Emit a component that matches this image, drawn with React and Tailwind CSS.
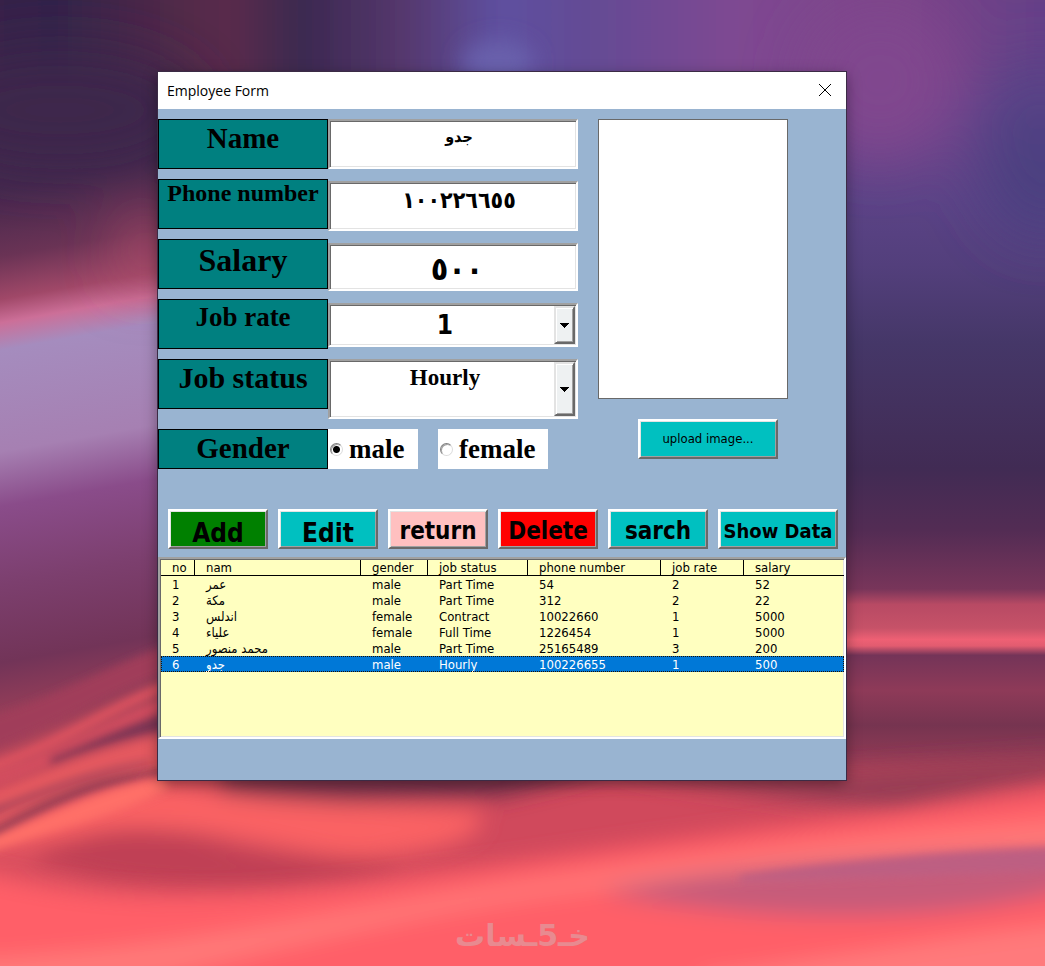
import { useState } from "react"
import clsx from "clsx"

const employees = [
  { no: 1, name: "عمر", gender: "male", status: "Part Time", phone: "54", rate: 2, salary: 52 },
  { no: 2, name: "مكة", gender: "male", status: "Part Time", phone: "312", rate: 2, salary: 22 },
  { no: 3, name: "اندلس", gender: "female", status: "Contract", phone: "10022660", rate: 1, salary: 5000 },
  { no: 4, name: "علياء", gender: "female", status: "Full Time", phone: "1226454", rate: 1, salary: 5000 },
  { no: 5, name: "محمد منصور", gender: "male", status: "Part Time", phone: "25165489", rate: 3, salary: 200 },
  { no: 6, name: "جدو", gender: "male", status: "Hourly", phone: "100226655", rate: 1, salary: 500 },
]

const columns = [
  { label: "no", width: "w-[34px]" },
  { label: "nam", width: "w-[166px]" },
  { label: "gender", width: "w-[67px]" },
  { label: "job status", width: "w-[100px]" },
  { label: "phone number", width: "w-[133px]" },
  { label: "job rate", width: "w-[83px]" },
  { label: "salary", width: "" },
]

const actions = [
  { label: "Add", style: "bg-[#008000] text-[26px] pt-2" },
  { label: "Edit", style: "bg-[#00c0c0] text-[26px] pt-2" },
  { label: "return", style: "bg-[#ffc0c0] text-[24px] pt-1" },
  { label: "Delete", style: "bg-[#ff0000] text-[24px] pt-1" },
  { label: "sarch", style: "bg-[#00c0c0] text-[24px] pt-1" },
  { label: "Show Data", style: "bg-[#00c0c0] text-[20px] pt-1" },
]

const serif = "font-['Liberation_Serif',serif] font-bold"
const sans = "font-['DejaVu_Sans_Condensed','DejaVu_Sans',sans-serif]"

// Classic two-step bevels: sunken for fields, raised for buttons
const sunken =
  "border-2 border-t-[#a0a0a0] border-l-[#a0a0a0] border-r-white border-b-white shadow-[inset_1px_1px_0_#696969,inset_-1px_-1px_0_#e3e3e3]"
const raised =
  "border-2 border-t-white border-l-white border-r-[#696969] border-b-[#696969] shadow-[inset_1px_1px_0_#e3e3e3,inset_-1px_-1px_0_#a0a0a0]"

function Wallpaper() {
  return (
    <svg
      className="absolute inset-0 h-full w-full"
      viewBox="0 0 1045 966"
      preserveAspectRatio="xMidYMid slice"
      aria-hidden="true"
    >
      <defs>
        <linearGradient id="left" gradientUnits="userSpaceOnUse" x1="80" y1="0" x2="214" y2="758">
          <stop offset="0" stopColor="#38264c" />
          <stop offset="0.22" stopColor="#43274d" />
          <stop offset="0.31" stopColor="#6a3355" />
          <stop offset="0.365" stopColor="#a04868" />
          <stop offset="0.395" stopColor="#cc6f98" />
          <stop offset="0.43" stopColor="#a58cbe" />
          <stop offset="0.56" stopColor="#a680b2" />
          <stop offset="0.63" stopColor="#8a4c8a" />
          <stop offset="0.73" stopColor="#7c3f6e" />
          <stop offset="0.83" stopColor="#723458" />
          <stop offset="0.9" stopColor="#983e58" />
          <stop offset="1" stopColor="#d44e5c" />
        </linearGradient>
        <linearGradient id="right" gradientUnits="userSpaceOnUse" x1="0" y1="0" x2="0" y2="780">
          <stop offset="0" stopColor="#6c3f86" />
          <stop offset="0.13" stopColor="#6e448c" />
          <stop offset="0.26" stopColor="#5b4386" />
          <stop offset="0.34" stopColor="#533f7c" />
          <stop offset="0.44" stopColor="#453768" />
          <stop offset="0.6" stopColor="#412b54" />
          <stop offset="0.68" stopColor="#532c54" />
          <stop offset="0.755" stopColor="#78355a" />
          <stop offset="0.775" stopColor="#b84a64" />
          <stop offset="0.805" stopColor="#c65268" />
          <stop offset="0.82" stopColor="#ee6074" />
          <stop offset="0.828" stopColor="#e25c70" />
          <stop offset="0.84" stopColor="#743458" />
          <stop offset="0.885" stopColor="#8e3a58" />
          <stop offset="0.93" stopColor="#763450" />
          <stop offset="1" stopColor="#a03e58" />
        </linearGradient>
        <linearGradient id="top">
          <stop offset="0" stopColor="#3c2448" />
          <stop offset="0.1" stopColor="#32244a" />
          <stop offset="0.18" stopColor="#4c2848" />
          <stop offset="0.25" stopColor="#5a2c4c" />
          <stop offset="0.31" stopColor="#3b2850" />
          <stop offset="0.4" stopColor="#56386e" />
          <stop offset="0.48" stopColor="#5e50a0" />
          <stop offset="0.56" stopColor="#644b94" />
          <stop offset="0.68" stopColor="#7e4892" />
          <stop offset="0.82" stopColor="#7c4488" />
          <stop offset="1" stopColor="#5c4088" />
        </linearGradient>
        <filter id="soft" x="-30%" y="-60%" width="160%" height="220%">
          <feGaussianBlur stdDeviation="11" />
        </filter>
        <filter id="wide" x="-60%" y="-60%" width="220%" height="220%">
          <feGaussianBlur stdDeviation="28" />
        </filter>
        <filter id="fine" x="-30%" y="-60%" width="160%" height="220%">
          <feGaussianBlur stdDeviation="4" />
        </filter>
      </defs>

      <rect width="1045" height="966" fill="#d84e5e" />
      <rect width="500" height="790" fill="url(#left)" />
      <rect x="500" width="545" height="790" fill="url(#right)" />
      <rect x="-60" y="-60" width="1165" height="150" fill="url(#top)" filter="url(#soft)" />

      {/* sky */}
      <g filter="url(#wide)">
        <ellipse cx="880" cy="80" rx="80" ry="80" fill="#80468e" />
        <ellipse cx="1040" cy="140" rx="70" ry="80" fill="#564386" />
        <ellipse cx="1045" cy="180" rx="60" ry="60" fill="#4c3f80" />
        <ellipse cx="60" cy="110" rx="140" ry="60" fill="#3c264b" />
        <ellipse cx="145" cy="250" rx="26" ry="34" fill="#a84866" />
      </g>
      <ellipse cx="498" cy="62" rx="36" ry="22" fill="#6960ac" filter="url(#soft)" />

      {/* streaks on the left */}
      <g filter="url(#fine)">
        <path d="M-20 720 C50 700 110 665 170 645 L170 672 C110 692 60 724 -20 755Z" fill="#a03d5a" />
        <path d="M-20 765 C50 745 110 700 170 680 L170 690 C110 712 60 750 -20 775Z" fill="#e0535f" />
        <path d="M-20 778 C50 758 110 718 170 696 L170 708 C110 728 60 768 -20 790Z" fill="#d44e5e" />
        <path d="M50 758 C90 742 130 722 170 712 L170 728 C120 738 80 752 50 764Z" fill="#7a3454" />
        <path d="M-20 800 C50 770 110 745 170 735 L170 770 C100 785 40 810 -20 836Z" fill="#e4585f" />
        <path d="M-20 835 C40 800 90 775 165 768 L165 776 C110 784 60 800 -20 850Z" fill="#8c3a52" />
        <path d="M-20 812 C40 790 90 768 150 760 L150 764 C90 776 40 795 -20 822Z" fill="#a8445a" />
      </g>

      {/* clouds under the horizon */}
      <path d="M150 783 L1100 770 L1100 850 L600 880 L150 870Z" fill="#d04a5c" filter="url(#soft)" />
      <g filter="url(#soft)">
        <path d="M220 770 L620 768 L500 796 L330 803 L220 793Z" fill="#6c2f48" />
        <path d="M600 770 L850 770 L1060 755 L1060 775 L900 812 L800 800Z" fill="#983c54" />
        <path d="M-20 850 C50 810 110 795 170 782 C260 805 400 800 480 812 C490 830 460 850 360 858 C260 850 180 815 90 835 Z" fill="#fa6264" />
        <path d="M30 860 C90 815 180 825 240 848 C320 862 400 850 400 868 C330 892 200 895 100 880Z" fill="#c04055" />
      </g>
      <path d="M-20 842 C40 822 90 790 165 778 L170 788 C120 815 60 826 -20 856Z" fill="#ff7067" filter="url(#fine)" />
      <g filter="url(#soft)">
        <path d="M-40 865 C120 915 300 895 480 868 C680 838 850 818 1100 785 L1100 1010 L-40 1010Z" fill="#ff5f68" />
        <path d="M-40 960 C200 950 380 900 560 878 C760 848 900 834 1100 818 L1100 848 C900 850 700 875 560 894 C400 915 260 955 160 975 L-40 1000Z" fill="#ff7a79" />
        <path d="M600 892 C720 866 900 856 1100 852 L1100 880 C960 930 740 922 600 892Z" fill="#c65c7a" />
        <path d="M700 975 C850 955 960 935 1100 920 L1100 1000 L700 1000Z" fill="#ff7a7c" />
      </g>
      <path d="M740 876 C850 860 960 850 1080 846 L1080 870 C980 874 860 880 740 882Z" fill="#bd5f82" filter="url(#fine)" />
    </svg>
  )
}

function FieldLabel({ htmlFor, className, children }) {
  return (
    <label
      htmlFor={htmlFor}
      className={clsx(serif, "block h-[50px] border border-black bg-[#008080] text-center", className)}
    >
      {children}
    </label>
  )
}

function Combo({ id, className, options, ...props }) {
  return (
    <div className={clsx("relative bg-white", sunken, className)}>
      <select id={id} className="h-full w-full appearance-none bg-transparent pr-4 text-center outline-none" {...props}>
        {options.map((option) => (
          <option key={option}>{option}</option>
        ))}
      </select>
      <span className="pointer-events-none absolute top-px right-px bottom-px flex w-[21px] items-center justify-center border-2 border-t-[#e3e3e3] border-r-[#696969] border-b-[#696969] border-l-[#e3e3e3] bg-[#eef1f2] shadow-[inset_1px_1px_0_#fff,inset_-1px_-1px_0_#a0a0a0]">
        <svg className="h-[5px] w-[9px]" viewBox="0 0 9 5" shapeRendering="crispEdges" aria-hidden="true">
          <path d="M0 0H9L4.5 5Z" />
        </svg>
      </span>
    </div>
  )
}

function Radio({ label, className, ...props }) {
  return (
    <label className={clsx(serif, "flex h-10 items-center bg-white pl-[2px] text-[27px]", className)}>
      <input
        type="radio"
        name="gender"
        className="h-[13px] w-[13px] appearance-none rounded-full border border-t-[#808080] border-r-[#dcdcdc] border-b-[#dcdcdc] border-l-[#808080] bg-white shadow-[inset_1px_1px_0_#a0a0a0] checked:bg-[radial-gradient(circle,#000_3px,#fff_4px)]"
        {...props}
      />
      <span className="ml-1.5">{label}</span>
    </label>
  )
}

function App() {
  const [gender, setGender] = useState("male")
  const [selected, setSelected] = useState(6)

  return (
    <div className="relative min-h-screen overflow-hidden bg-[#d84e5e]">
      <Wallpaper />

      <div className="relative px-4 pt-[72px] pb-4 md:pl-[158px]">
        <main className="max-w-[688px] bg-[#99b4d1] text-black shadow-[0_0_0_1px_#3b2b45,0_4px_14px_rgba(0,0,0,0.4)]">
          <header className="flex h-[37px] items-center justify-between bg-white pr-[14px] pl-[9px]">
            <h1 className="font-['Open_Sans',sans-serif] text-[14px]">Employee Form</h1>
            <button type="button" aria-label="Close">
              <svg className="h-[14px] w-[14px]" viewBox="0 0 14 14" aria-hidden="true">
                <path d="M1 0L13 12M13 0L1 12" stroke="#000" />
              </svg>
            </button>
          </header>

          <div className="flex pt-2.5">
            <div>
              <div className="flex">
                <div className="flex w-[170px] flex-col gap-2.5">
                  <FieldLabel htmlFor="name" className="text-[29px] leading-[36px]">Name</FieldLabel>
                  <FieldLabel htmlFor="phone" className="text-[24px] leading-[26px]">Phone number</FieldLabel>
                  <FieldLabel htmlFor="salary" className="text-[32px] leading-[40px]">Salary</FieldLabel>
                  <FieldLabel htmlFor="rate" className="text-[27px] leading-[34px]">Job rate</FieldLabel>
                  <FieldLabel htmlFor="status" className="text-[30px] leading-[36px]">Job status</FieldLabel>
                </div>
                <div className="flex w-[250px] flex-col gap-3">
                  <input
                    id="name"
                    defaultValue="جدو"
                    className={clsx(sans, sunken, "h-[50px] bg-white pb-4 pl-3 text-center text-[16px] font-bold")}
                  />
                  <input
                    id="phone"
                    defaultValue="١٠٠٢٢٦٦٥٥"
                    className={clsx(sans, sunken, "h-[50px] bg-white pb-3 pl-3 text-center text-[23px] font-bold")}
                  />
                  <input
                    id="salary"
                    defaultValue="٥٠٠"
                    className={clsx(sans, sunken, "h-12 bg-white pt-1 pl-2 text-center text-[32px] font-bold")}
                  />
                  <Combo
                    id="rate"
                    options={["1", "2", "3"]}
                    defaultValue="1"
                    className={clsx(sans, "h-11 text-[26px] font-bold")}
                  />
                  <Combo
                    id="status"
                    options={["Hourly", "Part Time", "Full Time", "Contract"]}
                    defaultValue="Hourly"
                    className={clsx(serif, "h-[60px] pb-6 text-[23px]")}
                  />
                </div>
              </div>

              <div className="mt-2.5 flex" role="radiogroup" aria-label="Gender">
                <div className={clsx(serif, "h-10 w-[170px] border border-black bg-[#008080] text-center text-[29px] leading-[36px]")}>
                  Gender
                </div>
                <Radio label="male" className="w-[90px]" checked={gender === "male"} onChange={() => setGender("male")} />
                <Radio
                  label="female"
                  className="ml-5 w-[110px]"
                  checked={gender === "female"}
                  onChange={() => setGender("female")}
                />
              </div>
            </div>

            <div className="ml-5 w-[190px]">
              <div className="h-[280px] border border-[#696969] bg-white" />
              <button type="button" className={clsx(sans, raised, "mt-5 ml-10 h-10 w-[140px] bg-[#00c0c0] text-[13px]")}>
                upload image...
              </button>
            </div>
          </div>

          <div className="mt-10 grid grid-cols-[5fr_5fr_5fr_5fr_5fr_6fr] gap-2.5 pr-2 pl-2.5">
            {actions.map((action) => (
              <button
                key={action.label}
                type="button"
                className={clsx(
                  sans,
                  raised,
                  "flex h-10 items-center justify-center overflow-hidden leading-none font-bold whitespace-nowrap",
                  action.style
                )}
              >
                {action.label}
              </button>
            ))}
          </div>

          <div className="pt-2 pb-[41px]">
            <div className={clsx(sunken, "h-[182px] bg-[#ffffc0] pt-px pl-px")}>
              <table className={clsx(sans, "w-full table-fixed border-separate border-spacing-0 text-left text-[13px] leading-[15px]")}>
                <thead>
                  <tr className="h-4">
                    {columns.map((col) => (
                      <th
                        key={col.label}
                        className={clsx(
                          "border-r border-b border-black p-0 pl-[11px] font-normal whitespace-nowrap last:border-r-0",
                          col.width
                        )}
                      >
                        {col.label}
                      </th>
                    ))}
                  </tr>
                </thead>
                <tbody>
                  {employees.map((e) => (
                    <tr
                      key={e.no}
                      onClick={() => setSelected(e.no)}
                      className={clsx(
                        "h-4 [&>td]:p-0 [&>td]:pl-[11px]",
                        selected === e.no && "bg-[#0078d7] text-white outline-1 -outline-offset-1 outline-[#201000] outline-dotted"
                      )}
                    >
                      <td>{e.no}</td>
                      <td>{e.name}</td>
                      <td>{e.gender}</td>
                      <td>{e.status}</td>
                      <td>{e.phone}</td>
                      <td>{e.rate}</td>
                      <td>{e.salary}</td>
                    </tr>
                  ))}
                </tbody>
              </table>
            </div>
          </div>
        </main>
      </div>

      <div
        dir="rtl"
        className="absolute inset-x-0 bottom-2 text-center font-['DejaVu_Sans',sans-serif] text-[30px] leading-[44px] font-bold text-[#e88a90]"
      >
        خـ5ـسات
      </div>
    </div>
  )
}

export default App
